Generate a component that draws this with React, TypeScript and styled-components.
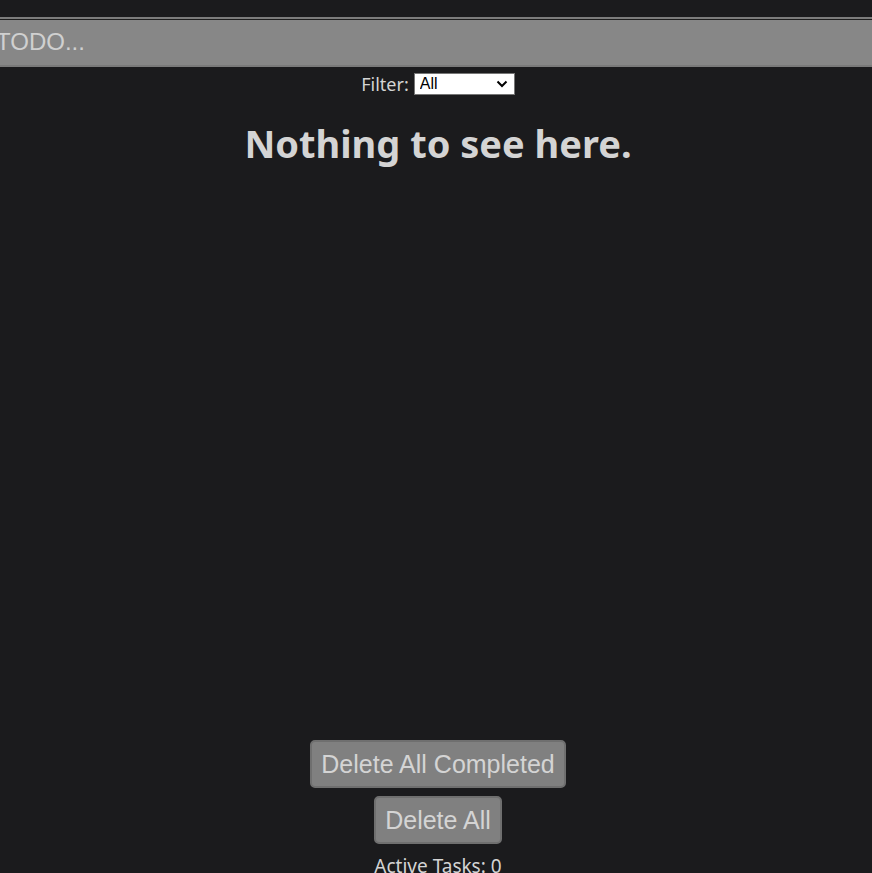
import React from "react";
import styled, { createGlobalStyle } from "styled-components";

const Global = createGlobalStyle`
  html, body { margin: 0; padding: 0; background: #1b1b1d; overflow: hidden; }
  body { font-family: "Noto Sans", "Open Sans", sans-serif; color: #d4d4d4; }
`;

const chevron =
  "url(\"data:image/svg+xml;utf8,<svg xmlns='http://www.w3.org/2000/svg' width='12' height='8' viewBox='0 0 12 8'><path d='M1.5 1.5 L6 6 L10.5 1.5' fill='none' stroke='%23000' stroke-width='2'/></svg>\")";

const Page = styled.div`
  width: 876px;
  display: flex;
  flex-direction: column;
  align-items: center;
  padding-top: 17px;
`;

const TodoInput = styled.input`
  box-sizing: border-box;
  width: calc(100% + 14px);
  margin-left: -14px;
  height: 50px;
  padding: 0 10px;
  background: #878787;
  border: none;
  border-top: 2px solid #7c7c7c;
  border-bottom: 2px solid #7a7a7a;
  box-shadow: inset 0 1px 0 #1e1e1e;
  font-family: "Liberation Sans", Arial, sans-serif;
  font-size: 24px;
  color: #d4d4d4;
  outline: none;
  &::placeholder { color: #d0d0d0; opacity: 1; }
`;

const FilterRow = styled.div`
  display: flex;
  align-items: center;
  gap: 5px;
  margin-top: 5px;
  font-size: 18px;
  height: 23px;
`;

const FilterSelect = styled.select`
  box-sizing: border-box;
  width: 101px;
  height: 22px;
  font-family: "Liberation Sans", Arial, sans-serif;
  font-size: 16px;
  background: #fff ${chevron} no-repeat right 6px center;
  color: #000;
  border: 1px solid #767676;
  border-radius: 0;
  padding: 0 20px 0 5px;
  appearance: none;
  -webkit-appearance: none;
`;

const Heading = styled.h1`
  margin: 22px 0 0;
  font-size: 38px;
  font-weight: 700;
  line-height: 52px;
  color: #d4d4d4;
`;

const ListArea = styled.div`
  height: 571px;
`;

const Actions = styled.div`
  display: flex;
  flex-direction: column;
  align-items: center;
  gap: 8px;
`;

const ActionButton = styled.button`
  height: 48px;
  padding: 0 9px;
  background: #808080;
  border: 2px solid #6f6f6f;
  border-radius: 5px;
  font-family: "Liberation Sans", Arial, sans-serif;
  font-size: 25px;
  color: #d4d4d4;
  cursor: pointer;
`;

const Footer = styled.p`
  margin: 9px 0 0;
  font-size: 19px;
  line-height: 26px;
`;

export default function App() {
  return (
    <>
      <Global />
      <Page>
        <TodoInput placeholder="TODO..." />
        <FilterRow>
          <span>Filter:</span>
          <FilterSelect defaultValue="all">
            <option value="all">All</option>
            <option value="active">Active</option>
            <option value="completed">Completed</option>
          </FilterSelect>
        </FilterRow>
        <Heading>Nothing to see here.</Heading>
        <ListArea />
        <Actions>
          <ActionButton>Delete All Completed</ActionButton>
          <ActionButton>Delete All</ActionButton>
        </Actions>
        <Footer>Active Tasks: 0</Footer>
      </Page>
    </>
  );
}
